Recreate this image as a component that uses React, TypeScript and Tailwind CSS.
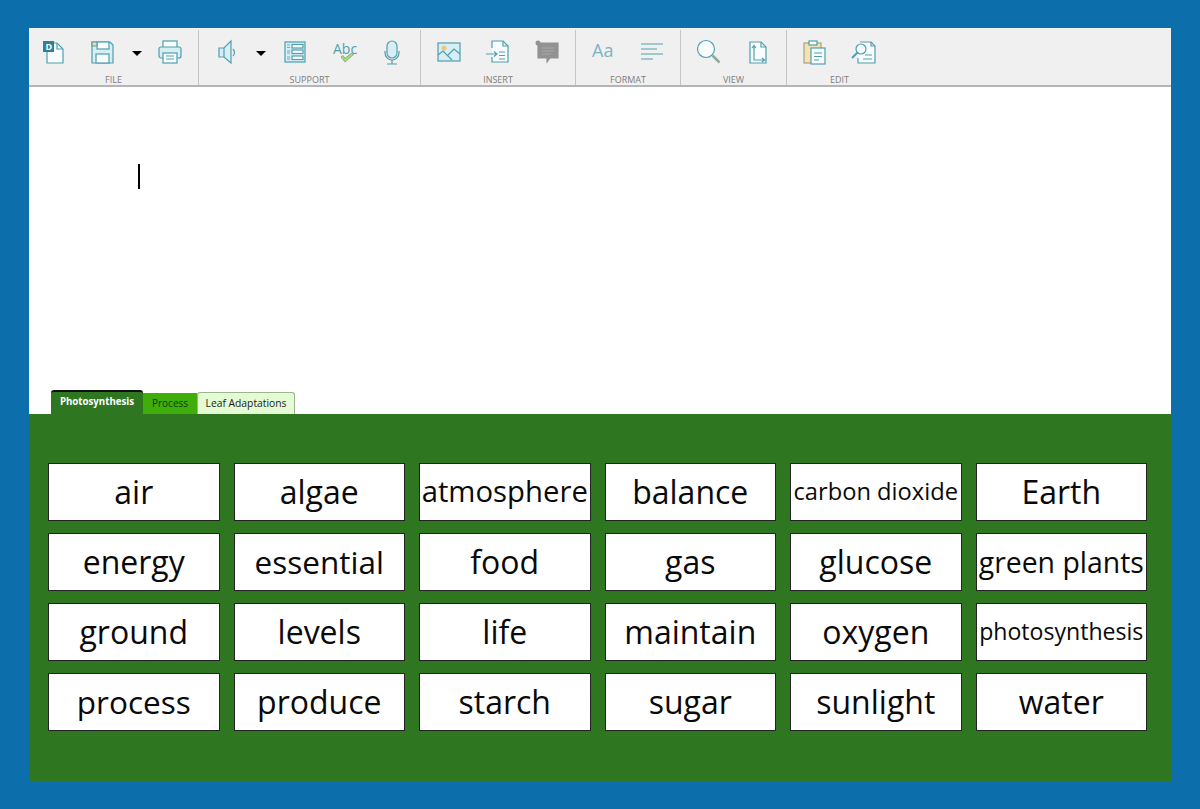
import React from "react";

const S = "#4f9fb0";
const L = "#d6eef4";

function Svg({ children, cls }: { children: React.ReactNode; cls: string }) {
  return (
    <svg viewBox="0 0 32 32" className={`w-8 h-8 shrink-0 ${cls}`} fill="none" stroke={S} strokeWidth="1.2">
      {children}
    </svg>
  );
}

function Arrow({ cls }: { cls: string }) {
  return <div className={`w-0 h-0 border-l-[5px] border-r-[5px] border-t-[5px] border-l-transparent border-r-transparent border-t-black mt-[2px] shrink-0 ${cls}`} />;
}

function Group({ label, w, children }: { label: string; w: string; children: React.ReactNode }) {
  return (
    <div className={`${w} shrink-0 flex flex-col border-r border-[#c4c4c4] last:border-r-0`}>
      <div className="flex items-center h-8 mt-[6px]">{children}</div>
      <div className="text-center text-[9px] leading-[10px] text-[#7d7d7d] mt-[7px]">{label}</div>
    </div>
  );
}

const words: [string, string][] = [
  ["air", "text-[32px]"], ["algae", "text-[32px]"], ["atmosphere", "text-[29.3px]"], ["balance", "text-[32px]"], ["carbon dioxide", "text-[23.7px]"], ["Earth", "text-[32px]"],
  ["energy", "text-[32px]"], ["essential", "text-[31.5px]"], ["food", "text-[32px]"], ["gas", "text-[32px]"], ["glucose", "text-[32px]"], ["green plants", "text-[28.4px]"],
  ["ground", "text-[32px]"], ["levels", "text-[32px]"], ["life", "text-[32px]"], ["maintain", "text-[32px]"], ["oxygen", "text-[32px]"], ["photosynthesis", "text-[23.1px]"],
  ["process", "text-[31.5px]"], ["produce", "text-[32px]"], ["starch", "text-[32px]"], ["sugar", "text-[32px]"], ["sunlight", "text-[32px]"], ["water", "text-[32px]"],
];

export default function App() {
  return (
    <div className="w-[1200px] h-[809px] bg-[#0c6fab] pt-[28px] pl-[29px] pr-[29px] pb-[28px] overflow-hidden font-['Open_Sans','Noto_Sans',sans-serif]">
      <div className="h-full flex flex-col">
        <div className="h-[59px] shrink-0 bg-[#f0f0f0] border-b-2 border-[#b5b5b5] flex items-stretch pt-[2px]">
          <Group label="FILE" w="w-[170px]">
            <Svg cls="ml-[8px]">
              <path d="M10 7H20L26 13V27H10Z" fill="#f8fcfd" />
              <path d="M20 7V13H26" />
              <rect x="6" y="5" width="11" height="11" fill="#2f7f97" stroke="none" />
              <text x="8.5" y="14" fontSize="9" fontWeight="700" fill="#fff" stroke="none" fontFamily="Open Sans">D</text>
            </Svg>
            <Svg cls="ml-[17px]">
              <path d="M6 6H24L27 9V27H6Z" fill={L} />
              <rect x="11" y="6" width="12" height="7" fill="#f8fcfd" />
              <rect x="10" y="18" width="13" height="9" fill="#f8fcfd" />
              <path d="M6 6H11V10H6Z" fill="#f3d9a0" />
            </Svg>
            <Arrow cls="ml-[14px]" />
            <Svg cls="ml-[12px]">
              <rect x="9" y="5" width="14" height="7" fill="#f8fcfd" />
              <rect x="5" y="11" width="22" height="11" rx="2" fill={L} />
              <rect x="9" y="17" width="14" height="10" fill="#f8fcfd" />
              <path d="M12 20H20M12 23H20" />
            </Svg>
          </Group>
          <Group label="SUPPORT" w="w-[222px]">
            <Svg cls="ml-[12px]">
              <path d="M8 12H13L20 5V27L13 21H8Z" fill={L} />
              <path d="M13 12V21" />
              <path d="M22 13Q25 16.500 22 20" />
            </Svg>
            <Arrow cls="ml-[13px]" />
            <Svg cls="ml-[13px]">
              <rect x="6" y="6" width="20" height="20" fill={L} />
              <rect x="13" y="8.500" width="11" height="3.500" fill="#fff" />
              <rect x="13" y="14" width="11" height="3.500" fill="#fff" />
              <rect x="13" y="20" width="11" height="3.500" fill="#fff" />
              <path d="M8 9H11M8 11.500H11M8 15H11M8 17H11M8 21H11M8 23H11" strokeWidth="0.8" />
            </Svg>
            <Svg cls="ml-[17px]">
              <text x="5" y="18" fontSize="14" fill={S} stroke="none" fontFamily="Open Sans">Abc</text>
              <path d="M13 21L17 26L26 18L23.500 17L17 22.500L15 19.500Z" fill="#a9d98a" stroke="#6cae52" strokeWidth="0.8" />
            </Svg>
            <Svg cls="ml-[16px]">
              <rect x="11" y="5" width="10" height="17" rx="5" fill={L} />
              <path d="M9 15V17A7 7 0 0 0 23 17V15M16 24V28M11 28H21" />
            </Svg>
          </Group>
          <Group label="INSERT" w="w-[155px]">
            <Svg cls="ml-[12px]">
              <rect x="5" y="7" width="22" height="18" fill={L} />
              <circle cx="11" cy="12" r="2.500" fill="#f0c777" stroke="none" />
              <path d="M5 19L10 15L19 24M15 19L21 13L27 18" />
            </Svg>
            <Svg cls="ml-[17px]">
              <path d="M10 12V5H21L26 10V26H10V21" fill="#f8fcfd" />
              <path d="M21 5V10H26M4 18H14M12 15.500L15 18L12 20.500M17 16H23M17 19.500H23M17 23H23" />
            </Svg>
            <Svg cls="ml-[17px]">
              <path d="M6 7H27V22H19L16 26V22H7V7Z" fill="#929292" stroke="#929292" />
              <circle cx="7" cy="7" r="2.500" fill="#929292" stroke="none" />
              <path d="M11 12H23M11 15H23M11 18H20" stroke="#a8a8a8" />
            </Svg>
          </Group>
          <Group label="FORMAT" w="w-[105px]">
            <Svg cls="ml-[11px]">
              <text x="5" y="21" fontSize="18" fill="#7cb3c4" stroke="none" fontFamily="Open Sans">Aa</text>
            </Svg>
            <Svg cls="ml-[17px]">
              <path d="M5 8H27M5 13H21M5 18H27M5 23H17" />
            </Svg>
          </Group>
          <Group label="VIEW" w="w-[106px]">
            <Svg cls="ml-[12px]">
              <circle cx="13" cy="13" r="8.500" fill="#f8fcfd" />
              <path d="M19.500 19.500L26.500 26.500" stroke="#8da9a0" strokeWidth="2.500" />
            </Svg>
            <Svg cls="ml-[16px]">
              <path d="M9 6H20L25 11V27H9Z" fill="#f8fcfd" />
              <path d="M20 6V11H25M13 10V24H23M11 12L13 9.500L15 12M21 22L23.500 24L21 26" />
            </Svg>
          </Group>
          <Group label="EDIT" w="w-[105px]">
            <Svg cls="ml-[11px]">
              <rect x="6" y="7" width="17" height="20" fill="#f3e2b5" stroke="#a9a27e" />
              <rect x="11" y="5" width="8" height="4" fill="#f8fcfd" />
              <rect x="13" y="12" width="14" height="16" fill="#f8fcfd" />
              <path d="M16 17H24M16 20.500H24M16 24H21" />
            </Svg>
            <Svg cls="ml-[18px]">
              <path d="M12 6H23L27 10V27H10V22" fill="#f8fcfd" />
              <path d="M23 6V10H27M17 19H24M15 23H24" />
              <circle cx="13" cy="13" r="5" fill="#f8fcfd" />
              <path d="M9.500 16.500L4 22" strokeWidth="2" />
            </Svg>
          </Group>
        </div>

        <div className="h-[327px] shrink-0 bg-white flex flex-col justify-between">
          <div className="pl-[109px] pt-[77px]">
            <div className="w-[2px] h-[25px] bg-black" />
          </div>
          <div className="flex items-end pl-[22px] h-[25px]">
            <div className="w-[92px] h-[24px] bg-[#2f7620] border-t-2 border-[#111] rounded-t-[3px] text-white font-bold text-[9.7px] text-center leading-[20px]">Photosynthesis</div>
            <div className="w-[54px] h-[21px] bg-[#3fae0a] text-[#0f3b06] text-[10px] text-center leading-[21px]">Process</div>
            <div className="w-[98px] h-[22px] bg-[#e4fbd3] border border-b-0 border-[#9bb592] rounded-t-[3px] text-[#1a1a1a] text-[10.3px] text-center leading-[21px]">Leaf Adaptations</div>
          </div>
        </div>

        <div className="flex-1 bg-[#2f7620] pt-[49px] pl-[19px] pr-[24px]">
          <div className="grid grid-cols-6 gap-x-[14px] gap-y-[12px]">
            {words.map(([w, size]) => (
              <div key={w} className={`h-[58px] bg-white border border-[#222] flex items-center justify-center text-[#0a0a0a] whitespace-nowrap leading-none ${size}`}>
                {w}
              </div>
            ))}
          </div>
        </div>
      </div>
    </div>
  );
}
